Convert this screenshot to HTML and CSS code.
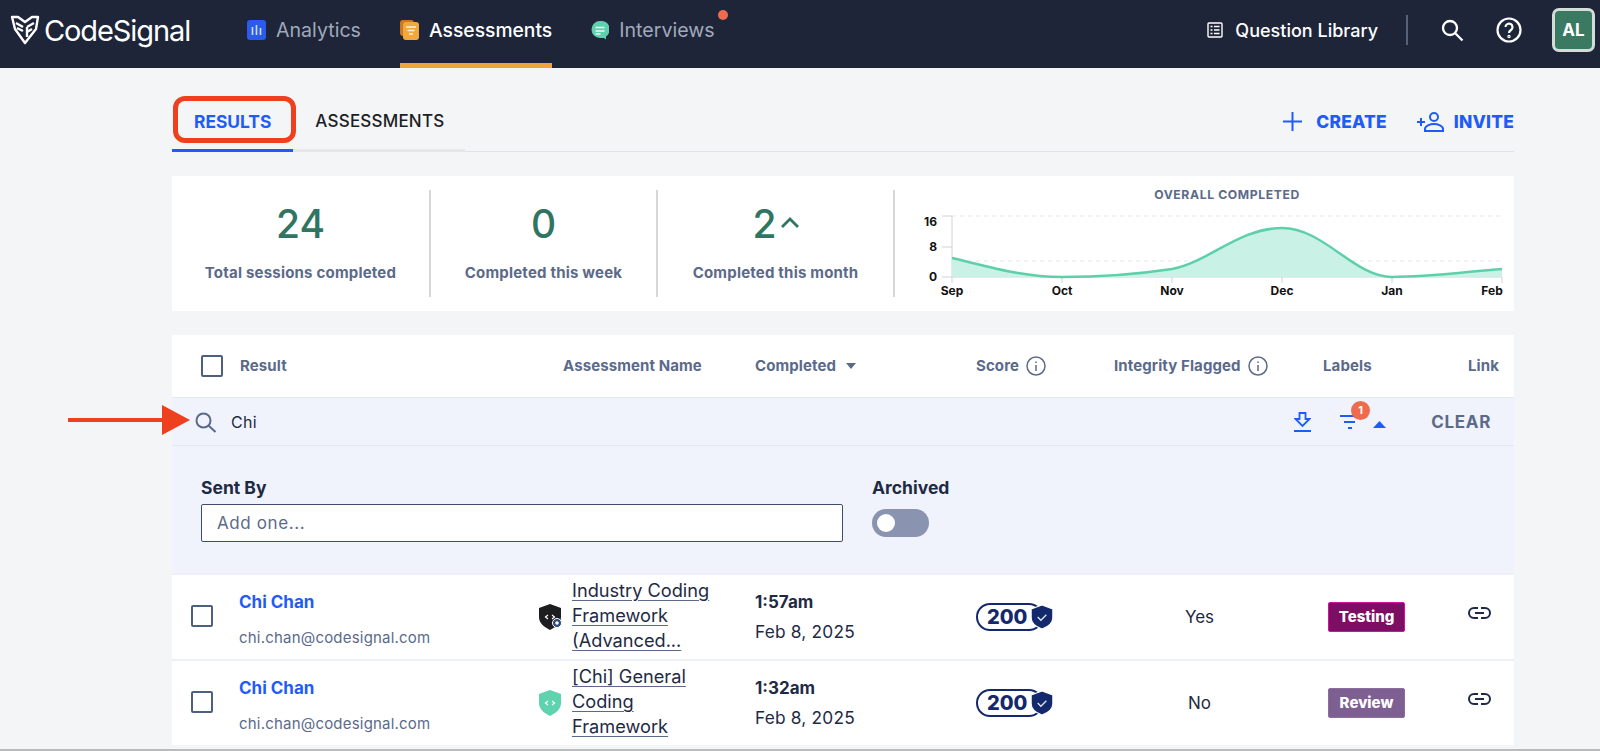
FILE: index.html
```html
<!DOCTYPE html>
<html lang="en">
<head>
<meta charset="utf-8">
<title>CodeSignal Results</title>
<link rel="stylesheet" href="styles.css">
</head>
<body>
<header class="topbar">
  <a class="logo">
    <svg class="logo-mark" viewBox="0 0 30 30" width="30" height="30" fill="none" stroke="#fff" stroke-width="2.4" stroke-linejoin="round"><path d="M2 2 L8 2 L15 7 L22 2 L28 2 L26 14 L15 28 L5 14 Z"/><path d="M6 8 L13 12 M7 13 L13 16 M24 8 L17 12 M17 12 V22 M17 17 L22 14"/></svg>
    <span class="logo-text">CodeSignal</span>
  </a>
  <nav class="mainnav">
    <a class="navitem">
      <svg width="19" height="20" viewBox="0 0 19 20"><rect width="19" height="20" rx="3" fill="#2a5bea"/><path d="M5.500 7v8M9.500 5v10M13.500 8v7" stroke="#cfdcff" stroke-width="1.600"/></svg>
      <span>Analytics</span>
    </a>
    <a class="navitem active">
      <svg width="19" height="20" viewBox="0 0 19 20"><rect x="0" y="0" width="14" height="16" rx="3" fill="#c9791f"/><rect x="3" y="2" width="16" height="18" rx="3" fill="#f3a83b"/><path d="M6 7h10M7.500 10.500h7M9 14h4" stroke="#fff3dc" stroke-width="1.500"/></svg>
      <span>Assessments</span>
    </a>
    <a class="navitem">
      <svg width="18" height="20" viewBox="0 0 18 20"><path d="M9 1a8.500 8.500 0 1 0 0 17h4l2 1.500v-3A8.500 8.500 0 0 0 9 1z" fill="#5fcfae"/><path d="M4.500 7.500h9M4.500 11h9M4.500 14h5" stroke="#e5fbf4" stroke-width="1.400"/></svg>
      <span>Interviews</span>
      <i class="navdot"></i>
    </a>
  </nav>
  <div class="topright">
    <a class="library">
      <svg width="16" height="16" viewBox="0 0 16 16" fill="none" stroke="#fff" stroke-width="1.400"><rect x="1" y="1" width="14" height="14" rx="1"/><path d="M3.500 4.500h2M7 4.500h5.500M3.500 8h2M7 8h5.500M3.500 11.500h2M7 11.500h5.500"/></svg>
      <span>Question Library</span>
    </a>
    <i class="topdivider"></i>
    <svg class="topsearch" width="23" height="23" viewBox="0 0 23 23" fill="none" stroke="#fff" stroke-width="2.300"><circle cx="9" cy="9" r="7"/><path d="M14 14l7.500 7.500"/></svg>
    <svg class="tophelp" width="26" height="26" viewBox="0 0 26 26" fill="none" stroke="#fff" stroke-width="2.200"><circle cx="13" cy="13" r="11.500"/><path d="M9.500 10a3.500 3.500 0 1 1 5.500 3c-1.300.9-2 1.500-2 3"/><circle cx="13" cy="19.500" r=".6"/></svg>
    <div class="avatar">AL</div>
  </div>
</header>

<main class="page">
  <div class="tabsbar">
    <div class="tabs">
      <a class="tab tab-active">RESULTS</a>
      <a class="tab">ASSESSMENTS</a>
    </div>
    <div class="actions">
      <a class="action">
        <svg width="19" height="19" viewBox="0 0 19 19" stroke="#1f5cf7" stroke-width="2"><path d="M9.500 0v19M0 9.500h19"/></svg>
        <span>CREATE</span>
      </a>
      <a class="action action-invite">
        <svg width="27" height="20" viewBox="0 0 27 20" fill="none" stroke="#1f5cf7" stroke-width="2"><path d="M0 10h8M4 6v8"/><circle cx="17" cy="5" r="4"/><path d="M8 19v-2c0-3 5-5 9-5s9 2 9 5v2z"/></svg>
        <span>INVITE</span>
      </a>
    </div>
  </div>

  <section class="stats">
    <div class="stat">
      <div class="stat-num">24</div>
      <div class="stat-label">Total sessions completed</div>
    </div>
    <div class="stat">
      <div class="stat-num">0</div>
      <div class="stat-label">Completed this week</div>
    </div>
    <div class="stat">
      <div class="stat-num">2<svg class="stat-caret" width="18" height="11" viewBox="0 0 18 11" fill="none" stroke="#2f7561" stroke-width="2.800"><path d="M1 10L9 2l8 8"/></svg></div>
      <div class="stat-label">Completed this month</div>
    </div>
    <div class="chart">
      <div class="chart-title">OVERALL COMPLETED</div>
      <svg class="chart-svg" width="619" height="95" viewBox="0 0 619 95">
        <path d="M58 14H608M58 59H608" stroke="#e4e6ea" stroke-dasharray="4 4" fill="none"/>
        <path d="M48 14H58V75M48 45H58M48 75H608M168 75v6M278 75v6M388 75v6M498 75v6M608 75v6M58 75v6" stroke="#cfd2d6" fill="none"/>
        <path class="area" d="M58 56C100 66 130 75 168 75C205 75 245 72 278 67C315 60 345 26 388 26C430 26 460 75 498 75C535 75 570 70 608 67V75H58Z"/>
        <path class="line" d="M58 56C100 66 130 75 168 75C205 75 245 72 278 67C315 60 345 26 388 26C430 26 460 75 498 75C535 75 570 70 608 67"/>
        <g class="ylab">
          <text x="43" y="24">16</text><text x="43" y="49">8</text><text x="43" y="79">0</text>
        </g>
        <g class="xlab">
          <text x="58" y="93">Sep</text><text x="168" y="93">Oct</text><text x="278" y="93">Nov</text><text x="388" y="93">Dec</text><text x="498" y="93">Jan</text><text x="598" y="93">Feb</text>
        </g>
      </svg>
    </div>
  </section>

  <section class="table">
    <div class="thead grid">
      <div><span class="check"></span></div>
      <div>Result</div>
      <div class="th-assess">Assessment Name</div>
      <div class="th-flex">Completed <svg width="10" height="6" viewBox="0 0 10 6"><path d="M0 0h10L5 6z" fill="#5b6a8a"/></svg></div>
      <div class="th-flex">Score
        <svg class="info" width="20" height="20" viewBox="0 0 20 20" fill="none" stroke="#5b6a8a" stroke-width="1.500"><circle cx="10" cy="10" r="9"/><path d="M10 9v6M10 5.500v1.500"/></svg></div>
      <div class="th-flex">Integrity Flagged
        <svg class="info" width="20" height="20" viewBox="0 0 20 20" fill="none" stroke="#5b6a8a" stroke-width="1.500"><circle cx="10" cy="10" r="9"/><path d="M10 9v6M10 5.500v1.500"/></svg></div>
      <div>Labels</div>
      <div>Link</div>
    </div>

    <div class="searchbar">
      <svg width="22" height="21" viewBox="0 0 22 21" fill="none" stroke="#5b6a8a" stroke-width="2"><circle cx="8.500" cy="8.500" r="7"/><path d="M13.500 13.500l7 6.500"/></svg>
      <span class="search-text">Chi</span>
      <div class="search-tools">
        <svg class="dl" width="17" height="20" viewBox="0 0 17 20" fill="none" stroke="#1f5cf7" stroke-width="1.800"><path d="M5.500 1h6v6h4l-7 7-7-7h4z"/><path d="M0 19h17" stroke-width="2"/></svg>
        <span class="filter">
          <svg width="20" height="16" viewBox="0 0 20 16" stroke="#1f5cf7" stroke-width="1.800"><path d="M0 2h19M4 8h11M8 14h4"/></svg>
          <b class="filter-badge">1</b>
        </span>
        <svg class="up" width="13" height="7" viewBox="0 0 13 7"><path d="M0 7L6.500 0 13 7z" fill="#1f5cf7"/></svg>
        <span class="clear">CLEAR</span>
      </div>
    </div>

    <div class="filters">
      <div class="field">
        <label class="field-label">Sent By</label>
        <div class="field-input">Add one...</div>
      </div>
      <div class="field">
        <label class="field-label">Archived</label>
        <div class="toggle"><i></i></div>
      </div>
    </div>

    <div class="row grid">
      <div><span class="check"></span></div>
      <div class="who"><a class="name">Chi Chan</a><span class="email">chi.chan@codesignal.com</span></div>
      <div class="assess">
        <svg width="24" height="28" viewBox="0 0 24 28"><path d="M12 1l11 4v9c0 6-5 10-11 13C6 24 1 20 1 14V5z" fill="#1d1d1f"/><path d="M10 12l-2.500 2 2.500 2M14 12l2.500 2-2.500 2" stroke="#fff" stroke-width="1.200" fill="none"/><circle cx="19" cy="20" r="4.500" fill="#2d4a73" stroke="#fff"/><circle cx="19" cy="20" r="1.800" fill="#fff"/></svg>
        <a class="assess-name">Industry Coding Framework (Advanced...</a>
      </div>
      <div class="when"><b>1:57am</b><span>Feb 8, 2025</span></div>
      <div><span class="score">200<svg width="26" height="26" viewBox="0 0 24 24"><path d="M12 1l10 3.500v8c0 5-4 8.500-10 10.500C6 21 2 17.500 2 12.500v-8z" fill="#13296b" stroke="#fff" stroke-width="1"/><path d="M8 12l3 3 5-5" stroke="#dfe6fb" stroke-width="1.200" fill="none"/></svg></span></div>
      <div class="flag">Yes</div>
      <div><span class="tag tag-testing">Testing</span></div>
      <div class="linkcell"><svg width="23" height="12" viewBox="0 0 23 12" fill="none" stroke="#1e2a44" stroke-width="2"><path d="M10 1H6a5 5 0 0 0 0 10h4M13 1h4a5 5 0 0 1 0 10h-4M7 6h9"/></svg></div>
    </div>

    <div class="row grid">
      <div><span class="check"></span></div>
      <div class="who"><a class="name">Chi Chan</a><span class="email">chi.chan@codesignal.com</span></div>
      <div class="assess">
        <svg width="24" height="28" viewBox="0 0 24 28"><path d="M12 1l11 4v9c0 6-5 10-11 13C6 24 1 20 1 14V5z" fill="#5fd3ad"/><path d="M10 12l-2.500 2 2.500 2M14 12l2.500 2-2.500 2" stroke="#fff" stroke-width="1.200" fill="none"/></svg>
        <a class="assess-name">[Chi] General Coding Framework</a>
      </div>
      <div class="when"><b>1:32am</b><span>Feb 8, 2025</span></div>
      <div><span class="score">200<svg width="26" height="26" viewBox="0 0 24 24"><path d="M12 1l10 3.500v8c0 5-4 8.500-10 10.500C6 21 2 17.500 2 12.500v-8z" fill="#13296b" stroke="#fff" stroke-width="1"/><path d="M8 12l3 3 5-5" stroke="#dfe6fb" stroke-width="1.200" fill="none"/></svg></span></div>
      <div class="flag">No</div>
      <div><span class="tag tag-review">Review</span></div>
      <div class="linkcell"><svg width="23" height="12" viewBox="0 0 23 12" fill="none" stroke="#1e2a44" stroke-width="2"><path d="M10 1H6a5 5 0 0 0 0 10h4M13 1h4a5 5 0 0 1 0 10h-4M7 6h9"/></svg></div>
    </div>
  </section>
</main>

<div class="callout-box"></div>
<svg class="callout-arrow" width="122" height="30" viewBox="0 0 122 30"><path d="M0 13h94V0l28 15-28 15V17H0z" fill="#ee401f"/></svg>
</body>
</html>
```
FILE: styles.css
```css
* { box-sizing: border-box; }
html, body { margin: 0; padding: 0; height: 751px; overflow: hidden; }
body {
  background: #f4f5f7;
  font-family: Inter, "Liberation Sans", sans-serif;
  color: #1e2a44;
  border-bottom: 2px solid #b9bbbd;
}
a { color: inherit; text-decoration: none; }

/* top bar */
.topbar {
  height: 68px;
  background: #1e2539;
  display: flex;
  align-items: flex-start;
  color: #fff;
}
.logo { display: flex; align-items: center; height: 60px; margin-left: 10px; width: 180px; }
.logo-mark { flex: none; }
.logo-text { font-size: 29px; letter-spacing: -1.100px; margin-left: 4px; font-weight: 400; }
.mainnav { display: flex; margin-left: 57px; }
.navitem {
  position: relative;
  display: flex;
  align-items: center;
  gap: 10px;
  height: 68px;
  padding-bottom: 4px;
  font-size: 19.600px;
  color: #a0a9bb;
  margin-right: 39px;
  border-bottom: 5px solid transparent;
}
.navitem.active { color: #fff; border-bottom-color: #eda43a; font-weight: 500; font-size: 19.300px; }
.navdot {
  position: absolute;
  right: -13px;
  top: 10px;
  width: 10px;
  height: 10px;
  border-radius: 50%;
  background: #ee6c4d;
}
.topright { display: flex; align-items: center; margin-left: auto; height: 60px; padding-right: 5px; }
.library { display: flex; align-items: center; gap: 12px; font-size: 18px; font-weight: 500; }
.topdivider { width: 2px; height: 30px; background: #56627a; margin: 0 33px 0 28px; }
.tophelp { margin: 0 30px 0 32px; }
.avatar {
  width: 43px;
  height: 44px;
  background: #3a7a63;
  border: 3px solid #d4dcd8;
  border-radius: 7px;
  display: flex;
  align-items: center;
  justify-content: center;
  font-weight: 700;
  font-size: 17px;
}

/* page */
.page { margin: 0 86px 0 172px; }
.tabsbar {
  height: 84px;
  display: flex;
  justify-content: space-between;
  align-items: flex-end;
  border-bottom: 1px solid #dfe2e7;
}
.tabs { display: flex; width: 293px; border-bottom: 3px solid #e6e7e9; margin-bottom: -1px; }
.tab {
  height: 50px;
  padding: 9px 22px 0 22px;
  font-size: 17px;
  font-weight: 500;
  color: #1c1e26;
  letter-spacing: .2px;
  margin-bottom: -3px;
  border-bottom: 3px solid transparent;
  white-space: nowrap;
}
.tab-active { color: #1f5cf7; font-weight: 700; font-size: 17.400px; border-bottom-color: #1f5cf7; width: 122px; letter-spacing: 0; }
.actions { display: flex; gap: 10px; height: 50px; align-items: flex-start; padding-top: 10px; }
.action {
  display: flex;
  align-items: center;
  gap: 14px;
  color: #1f5cf7;
  font-weight: 800;
  font-size: 17.400px;
  letter-spacing: .2px;
  margin-left: 20px;
}
.action-invite { gap: 10px; }

/* stats */
.stats {
  margin-top: 24px;
  height: 135px;
  background: #fff;
  padding: 14px 0;
  display: grid;
  grid-template-columns: 259px 227px 237px 619px;
}
.stat {
  border-right: 2px solid #d6d8dc;
  text-align: center;
  padding-top: 14px;
}
.stat-num {
  font-size: 39px;
  line-height: 40px;
  font-weight: 500;
  color: #2f7561;
}
.stat-caret { margin-left: 4px; vertical-align: 10px; }
.stat-label {
  margin-top: 20px;
  font-size: 15px;
  line-height: 18px;
  font-weight: 700;
  letter-spacing: .2px;
  color: #5b6a8a;
}
.chart { position: relative; }
.chart-title {
  text-align: center;
  font-size: 12.200px;
  line-height: 12px;
  font-weight: 700;
  letter-spacing: .6px;
  color: #5b6a8a;
  margin-left: 45px;
  margin-top: -1px;
  margin-bottom: 1px;
}
.chart-svg { display: block; margin-left: -1px; }
.area { fill: #c9f1e5; }
.line { fill: none; stroke: #5dd0a9; stroke-width: 2.500; }
.ylab text { font-size: 12px; font-weight: 700; text-anchor: end; fill: #111; }
.xlab text { font-size: 12px; font-weight: 700; text-anchor: middle; fill: #111; }

/* table */
.table { margin-top: 24px; }
.grid {
  display: grid;
  grid-template-columns: 68px 299px 216px 221px 138px 209px 145px 46px;
  background: #fff;
}
.thead {
  height: 62px;
  padding-bottom: 1px;
  align-items: center;
  font-size: 15px;
  letter-spacing: .1px;
  font-weight: 700;
  color: #5b6a8a;
  white-space: nowrap;
}
.th-assess { padding-left: 24px; }
.th-flex { display: flex; align-items: center; gap: 6px; }
.th-flex .info { margin-left: 1px; }
.thead .check { margin-left: 29px; }
.th-flex svg:not(.info) { margin-left: 4px; }
.check {
  display: block;
  width: 22px;
  height: 22px;
  border: 2px solid #4f5f80;
  border-radius: 2px;
  margin-left: 19px;
  background: #fff;
}
.row .check { margin-top: -2px; }
.searchbar {
  height: 49px;
  background: #f0f3fb;
  border-top: 1px solid #e4e7ee;
  border-bottom: 1px solid #e4e7ee;
  display: flex;
  align-items: center;
  padding: 1px 0 0 23px;
}
.search-text { margin-left: 14px; font-size: 16px; letter-spacing: .3px; }
.search-tools { margin-left: auto; display: flex; align-items: center; padding-right: 23px; }
.filter { position: relative; display: block; height: 16px; margin-left: 29px; }
.filter svg { display: block; }
.filter-badge {
  position: absolute;
  left: 11px;
  top: -13px;
  width: 19px;
  height: 19px;
  border-radius: 50%;
  background: #ee6c4d;
  color: #fff;
  font-size: 11px;
  line-height: 19px;
  text-align: center;
}
.up { margin: 5px 0 0 13px; }
.clear { margin-left: 45px; font-weight: 700; font-size: 17px; letter-spacing: .7px; color: #5b6a8a; }
.filters {
  height: 127px;
  background: #f0f3fb;
  padding: 32px 0 0 29px;
  display: flex;
  gap: 29px;
}
.field-label { display: block; font-size: 17.500px; line-height: 20px; font-weight: 700; color: #1e2a44; }
.field-input {
  width: 642px;
  height: 38px;
  margin-top: 6px;
  background: #fff;
  border: 1px solid #3f4e6e;
  border-radius: 2px;
  padding-left: 15px;
  font-size: 17px;
  line-height: 36px;
  letter-spacing: .6px;
  color: #5b6a8a;
}
.toggle {
  width: 57px;
  height: 28px;
  margin-top: 11px;
  border-radius: 14px;
  background: #8a94b0;
  padding: 5px 0 0 5px;
}
.toggle i { display: block; width: 18px; height: 18px; border-radius: 50%; background: #fff; }

/* rows */
.row {
  height: 86px;
  align-items: center;
  border-top: 2px solid #edf0f8;
  font-size: 17px;
}
.who { display: flex; flex-direction: column; gap: 17px; margin: 6px 0 0 -1px; }
.name { font-weight: 700; color: #1f5cf7; font-size: 17px; line-height: 19px; }
.email { font-size: 15px; line-height: 18px; letter-spacing: .2px; color: #5b6a8a; }
.assess { display: flex; align-items: center; gap: 10px; margin-left: -1px; }
.assess svg { flex: none; }
.assess-name {
  display: block;
  width: 150px;
  margin-top: -3px;
  font-size: 18.200px;
  line-height: 25px;
  text-decoration: underline;
  text-underline-offset: 3px;
  text-decoration-color: #5b6a8a;
}
.when { display: flex; flex-direction: column; gap: 10px; margin-top: -1px; }
.when b { font-size: 17px; line-height: 20px; font-weight: 700; }
.when span { font-size: 17.300px; line-height: 20px; letter-spacing: .2px; }
.score {
  display: flex;
  position: relative;
  align-items: center;
  width: 67px;
  height: 28px;
  padding-left: 9px;
  border: 2px solid #13296b;
  border-radius: 14px;
  font-size: 20px;
  font-weight: 800;
  color: #13296b;
}
.score svg { position: absolute; right: -14px; top: -1px; }
.flag { text-align: center; padding-right: 38px; }
.tag {
  display: block;
  width: 77px;
  height: 30px;
  margin: 0 0 0 5px;
  border-radius: 2px;
  color: #fff;
  font-size: 15px;
  font-weight: 800;
  line-height: 28px;
  text-align: center;
}
.tag-testing { background: #7c0f63; border: 1px solid #d60fa0; }
.tag-review { background: #7e5f92; border: 1px solid #8c6da0; }
.linkcell { margin-top: -8px; }
.linkcell svg { display: block; }

/* annotations */
.callout-box {
  position: absolute;
  left: 173px;
  top: 96px;
  width: 123px;
  height: 47px;
  border: 5px solid #ee401f;
  border-radius: 12px;
}
.callout-arrow { position: absolute; left: 68px; top: 405px; }
```
